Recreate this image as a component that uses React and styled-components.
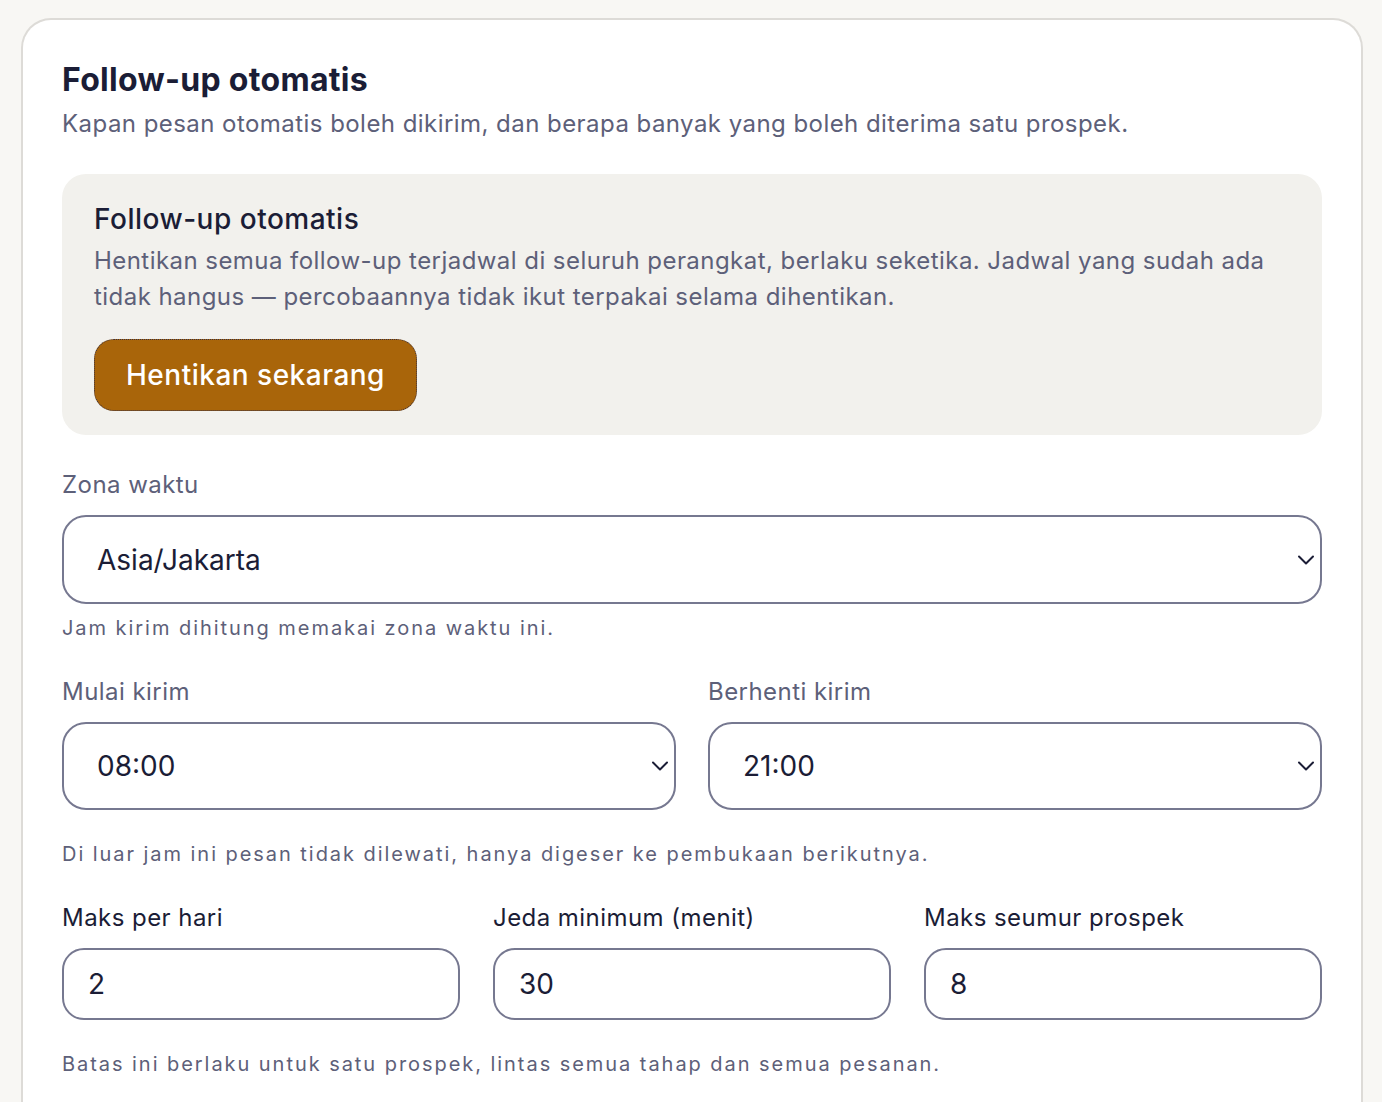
import React from "react";
import styled, { createGlobalStyle } from "styled-components";

const Global = createGlobalStyle`
  html, body { margin: 0; padding: 0; background: #f8f7f4; }
  body { font-family: Inter, "Noto Sans", sans-serif; color: #1b1d36; }
  * { box-sizing: border-box; }
`;

const Page = styled.div`
  padding: 18px 19px 0 21px;
  min-height: 1102px;
`;

const Card = styled.section`
  background: #fff;
  border: 2px solid #dddbd7;
  border-bottom: none;
  border-radius: 30px 30px 0 0;
  padding: 40px 39px 40px 39px;
  min-height: 1090px;
`;

const Title = styled.h2`
  margin: 0;
  font-size: 32px;
  line-height: 40px;
  font-weight: 700;
  letter-spacing: 0.3px;
  color: #1b1d36;
`;

const Subtitle = styled.p`
  margin: 6px 0 0;
  font-size: 24px;
  line-height: 36px;
  letter-spacing: 0.45px;
  color: #5d6079;
`;

const Panel = styled.div`
  margin-top: 32px;
  background: #f2f1ed;
  border-radius: 24px;
  padding: 25px 32px 24px 32px;
`;

const PanelTitle = styled.h3`
  margin: 0;
  font-size: 28px;
  line-height: 40px;
  font-weight: 500;
  letter-spacing: 0.5px;
  color: #1b1d36;
`;

const PanelText = styled.p`
  margin: 4px 0 0;
  font-size: 24px;
  line-height: 36px;
  letter-spacing: 0.45px;
  color: #5d6079;
`;

const StopButton = styled.button`
  margin-top: 24px;
  height: 72px;
  padding: 0 31px;
  background: #a9650a;
  color: #fff;
  border: 1px dotted #3a3040;
  border-radius: 20px;
  font-family: inherit;
  font-size: 28px;
  font-weight: 500;
  letter-spacing: 0.5px;
  cursor: pointer;
`;

const Field = styled.div`
  display: flex;
  flex-direction: column;
  gap: 12px;
  margin-top: ${(p) => p.$mt || 0}px;
  min-width: 0;
`;

const Label = styled.label`
  font-size: 24px;
  line-height: 36px;
  letter-spacing: 0.45px;
  color: ${(p) => (p.$dark ? "#1b1d36" : "#5d6079")};
`;

const SelectBox = styled.div`
  position: relative;
  height: ${(p) => p.$h || 88}px;
  border: 2px solid #767890;
  border-radius: 24px;
  display: flex;
  align-items: center;
  padding: 0 33px;
  font-size: 28px;
  color: #1b1d36;
  background: #fff;
`;

const Chevron = styled.svg`
  position: absolute;
  right: 5px;
  top: 50%;
  transform: translateY(-50%);
`;

const InputBox = styled.div`
  height: 72px;
  border: 2px solid #767890;
  border-radius: 22px;
  display: flex;
  align-items: center;
  padding: 0 24px;
  font-size: 28px;
  color: #1b1d36;
  background: #fff;
`;

const Hint = styled.p`
  margin: ${(p) => p.$mt || 10}px 0 0;
  font-size: 20px;
  line-height: 28px;
  letter-spacing: 1.95px;
  color: #5d6079;
`;

const Row = styled.div`
  display: grid;
  grid-template-columns: repeat(${(p) => p.$cols}, 1fr);
  column-gap: ${(p) => p.$gap}px;
  margin-top: 32px;
`;

const ChevronIcon = () => (
  <Chevron width="18" height="12" viewBox="0 0 18 12" fill="none">
    <path d="M2 2.5l7 7 7-7" stroke="#1b1d36" strokeWidth="2" strokeLinecap="round" strokeLinejoin="round" />
  </Chevron>
);

const Select = ({ value, h }) => (
  <SelectBox $h={h}>
    {value}
    <ChevronIcon />
  </SelectBox>
);

export default function App() {
  return (
    <>
      <Global />
      <Page>
        <Card>
          <Title>Follow-up otomatis</Title>
          <Subtitle>
            Kapan pesan otomatis boleh dikirim, dan berapa banyak yang boleh diterima satu prospek.
          </Subtitle>

          <Panel>
            <PanelTitle>Follow-up otomatis</PanelTitle>
            <PanelText>
              Hentikan semua follow-up terjadwal di seluruh perangkat, berlaku seketika. Jadwal yang sudah ada
              tidak hangus — percobaannya tidak ikut terpakai selama dihentikan.
            </PanelText>
            <StopButton>Hentikan sekarang</StopButton>
          </Panel>

          <Field $mt={32}>
            <Label>Zona waktu</Label>
            <Select value="Asia/Jakarta" h={89} />
          </Field>
          <Hint>Jam kirim dihitung memakai zona waktu ini.</Hint>

          <Row $cols={2} $gap={32}>
            <Field>
              <Label>Mulai kirim</Label>
              <Select value="08:00" />
            </Field>
            <Field>
              <Label>Berhenti kirim</Label>
              <Select value="21:00" />
            </Field>
          </Row>
          <Hint $mt={30}>Di luar jam ini pesan tidak dilewati, hanya digeser ke pembukaan berikutnya.</Hint>

          <Row $cols={3} $gap={33}>
            <Field>
              <Label $dark>Maks per hari</Label>
              <InputBox>2</InputBox>
            </Field>
            <Field>
              <Label $dark>Jeda minimum (menit)</Label>
              <InputBox>30</InputBox>
            </Field>
            <Field>
              <Label $dark>Maks seumur prospek</Label>
              <InputBox>8</InputBox>
            </Field>
          </Row>
          <Hint $mt={30}>Batas ini berlaku untuk satu prospek, lintas semua tahap dan semua pesanan.</Hint>
        </Card>
      </Page>
    </>
  );
}
